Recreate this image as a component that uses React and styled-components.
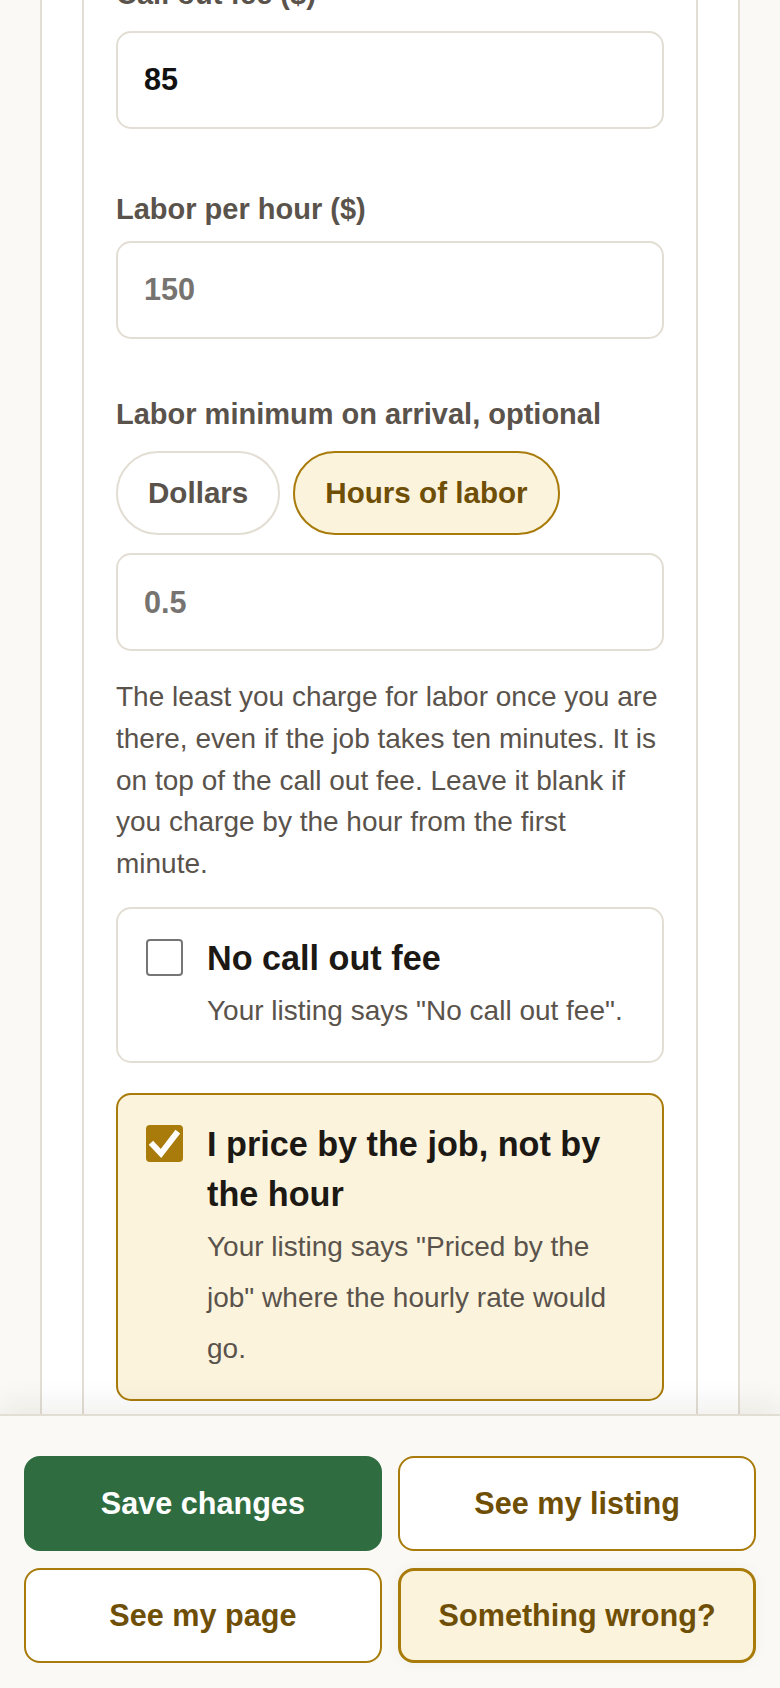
import React from "react";
import styled, { createGlobalStyle } from "styled-components";

const GlobalStyle = createGlobalStyle`
  html, body {
    margin: 0;
    padding: 0;
    background: #faf9f5;
    font-family: "Liberation Sans", Arial, sans-serif;
  }
  * { box-sizing: border-box; }
`;

const Screen = styled.div`
  height: 100vh;
  display: flex;
  flex-direction: column;
  background: #faf9f5;
`;

const ScrollArea = styled.div`
  flex: 1;
  min-height: 0;
  overflow: hidden;
`;

const Frame = styled.div`
  margin: -26px 40px 0;
  padding: 0 40px 200px;
  background: #fff;
  border-left: 2px solid #e3ded4;
  border-right: 2px solid #e3ded4;
`;

const Panel = styled.div`
  padding: 0 32px 200px;
  background: #fff;
  border-left: 2px solid #e3ded4;
  border-right: 2px solid #e3ded4;
`;

const Label = styled.div`
  margin-top: ${(p) => p.$top || 0}px;
  margin-bottom: ${(p) => p.$gap || 12}px;
  font-size: 29px;
  line-height: 40px;
  font-weight: 700;
  color: #5a534c;
`;

const TextInput = styled.input`
  display: block;
  width: 100%;
  height: 98px;
  margin: 0;
  padding: 0 26px;
  border: 2px solid #e3ded4;
  border-radius: 15px;
  background: #fff;
  font-family: inherit;
  font-size: 30.6px;
  font-weight: 700;
  color: #111;
  outline: none;
  &::placeholder {
    color: #767370;
    opacity: 1;
  }
`;

const ChoiceRow = styled.div`
  display: flex;
  gap: 13px;
  margin-bottom: 18px;
`;

const Pill = styled.button`
  height: 84.5px;
  padding: 0 30px;
  border-radius: 999px;
  border: 2px solid ${(p) => (p.$active ? "#a87b0a" : "#e3ded4")};
  background: ${(p) => (p.$active ? "#fcf3dc" : "#fff")};
  color: ${(p) => (p.$active ? "#6f4f06" : "#5a534c")};
  font-family: inherit;
  font-size: 29.6px;
  font-weight: 700;
`;

const Hint = styled.p`
  margin: 25px 0 22px;
  font-size: 28px;
  line-height: 41.75px;
  color: #5a534c;
`;

const OptionCard = styled.label`
  display: flex;
  align-items: flex-start;
  gap: 24px;
  margin-bottom: 30px;
  padding: 25px 28px 25px 28px;
  border: 2px solid ${(p) => (p.$checked ? "#a87b0a" : "#e3ded4")};
  border-radius: 15px;
  background: ${(p) => (p.$checked ? "#fcf3dc" : "#fff")};
`;

const CheckBox = styled.span`
  flex: none;
  width: 37px;
  height: 37px;
  margin-top: 5px;
  border-radius: 4px;
  border: ${(p) => (p.$checked ? "none" : "2px solid #767676")};
  background: ${(p) => (p.$checked ? "#a87b0a" : "#fff")};
  display: flex;
  align-items: center;
  justify-content: center;
`;

const OptionText = styled.div`
  flex: 1;
  min-width: 0;
`;

const OptionTitle = styled.div`
  font-size: 34.2px;
  line-height: 49.5px;
  font-weight: 700;
  color: #1c1814;
`;

const OptionNote = styled.div`
  margin-top: 2px;
  font-size: 28px;
  line-height: 51px;
  color: #5a534c;
`;

const ActionBar = styled.div`
  position: relative;
  z-index: 1;
  flex: none;
  padding: 40px 24px 25px;
  background: #faf9f5;
  border-top: 2px solid #e3ded4;
  box-shadow: 0 -10px 28px rgba(40, 30, 10, 0.07);
`;

const ActionGrid = styled.div`
  display: grid;
  grid-template-columns: 1fr 1fr;
  column-gap: 16.5px;
  row-gap: 17px;
`;

const ActionButton = styled.button`
  height: 95px;
  border-radius: 16px;
  font-family: inherit;
  font-size: 30.6px;
  font-weight: 700;
  border: ${(p) =>
    p.$variant === "primary"
      ? "2px solid #2f6d41"
      : p.$variant === "help"
      ? "3.5px solid #a87b0a"
      : "2px solid #a87b0a"};
  background: ${(p) =>
    p.$variant === "primary" ? "#2f6d41" : p.$variant === "help" ? "#fcf3dc" : "#fff"};
  color: ${(p) => (p.$variant === "primary" ? "#fff" : "#6f4f06")};
  box-shadow: ${(p) => (p.$variant === "help" ? "0 0 14px rgba(60, 50, 20, 0.05)" : "none")};
`;

function Check({ checked }) {
  return (
    <CheckBox $checked={checked}>
      {checked && (
        <svg width="37" height="37" viewBox="0 0 37 37">
          <path d="M7 20 L15 28.5 L30 9" fill="none" stroke="#fff" strokeWidth="6" strokeLinecap="square" />
        </svg>
      )}
    </CheckBox>
  );
}

function Option({ checked, title, note }) {
  return (
    <OptionCard $checked={checked}>
      <Check checked={checked} />
      <OptionText>
        <OptionTitle>{title}</OptionTitle>
        <OptionNote>{note}</OptionNote>
      </OptionText>
    </OptionCard>
  );
}

export default function App() {
  return (
    <>
      <GlobalStyle />
      <Screen>
        <ScrollArea>
          <Frame>
            <Panel>
              <Label $gap={16.5}>Call out fee ($)</Label>
              <TextInput defaultValue="85" />

              <Label $top={60} $gap={12}>Labor per hour ($)</Label>
              <TextInput placeholder="150" />

              <Label $top={55.5} $gap={16.5}>Labor minimum on arrival, optional</Label>
              <ChoiceRow>
                <Pill>Dollars</Pill>
                <Pill $active>Hours of labor</Pill>
              </ChoiceRow>
              <TextInput placeholder="0.5" />

              <Hint>
                The least you charge for labor once you are there, even if the job takes ten
                minutes. It is on top of the call out fee. Leave it blank if you charge by the
                hour from the first minute.
              </Hint>

              <Option
                title="No call out fee"
                note={'Your listing says "No call out fee".'}
              />
              <Option
                checked
                title="I price by the job, not by the hour"
                note={'Your listing says "Priced by the job" where the hourly rate would go.'}
              />
            </Panel>
          </Frame>
        </ScrollArea>
        <ActionBar>
          <ActionGrid>
            <ActionButton $variant="primary">Save changes</ActionButton>
            <ActionButton>See my listing</ActionButton>
            <ActionButton>See my page</ActionButton>
            <ActionButton $variant="help">Something wrong?</ActionButton>
          </ActionGrid>
        </ActionBar>
      </Screen>
    </>
  );
}
